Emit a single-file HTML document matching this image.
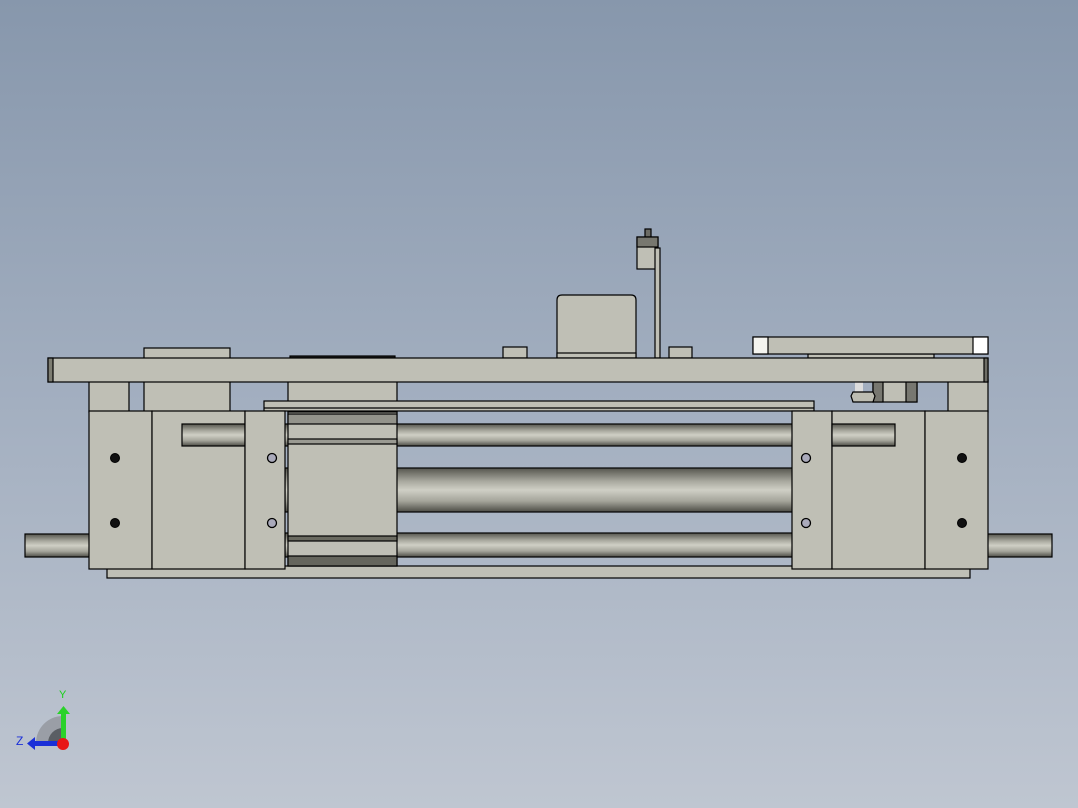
<!DOCTYPE html>
<html><head><meta charset="utf-8"><style>
html,body{margin:0;padding:0;width:1078px;height:808px;overflow:hidden;}
body{background:linear-gradient(#8797ac,#a3afc0 50%,#bfc6d1);}
svg{position:absolute;left:0;top:0;}
</style></head><body>
<svg width="1078" height="808" viewBox="0 0 1078 808" xmlns="http://www.w3.org/2000/svg">
<defs>
<linearGradient id="rod" x1="0" y1="0" x2="0" y2="1">
<stop offset="0" stop-color="#55554e"/><stop offset="0.3" stop-color="#a8a89e"/><stop offset="0.5" stop-color="#cfcfc5"/><stop offset="0.75" stop-color="#a5a59b"/><stop offset="1" stop-color="#4c4c45"/>
</linearGradient>
</defs>
<g stroke="#000" stroke-width="1.2" fill="#bfbfb5">
<!-- top parts -->
<rect x="645" y="229" width="6" height="16" fill="#6b6b64"/>
<rect x="637" y="237" width="21" height="32"/>
<rect x="637" y="237" width="21" height="10" fill="#77776f"/>
<rect x="655" y="248" width="5" height="110"/>
<path d="M557 358 V300 Q557 295 562 295 H631 Q636 295 636 300 V358 Z"/>
<rect x="557" y="353" width="79" height="5"/>
<rect x="503" y="347" width="24" height="11"/>
<rect x="669" y="347" width="23" height="11"/>
<rect x="144" y="348" width="86" height="64"/>
<rect x="290" y="356" width="105" height="2" fill="#222"/>
<rect x="808" y="354" width="126" height="4"/>
<rect x="753" y="337" width="235" height="17"/>
<rect x="753" y="337" width="15" height="17" fill="#f4f4ef"/>
<rect x="973" y="337" width="15" height="17" fill="#fff"/>
<!-- posts under plate -->
<rect x="89" y="380" width="40" height="32"/>
<rect x="948" y="380" width="40" height="32"/>
<rect x="288" y="380" width="109" height="32"/>
<rect x="855" y="382" width="8" height="10" fill="#ddd" stroke="none"/>
<rect x="873" y="382" width="44" height="20"/>
<rect x="873" y="382" width="10" height="20" fill="#777770"/>
<rect x="906" y="382" width="11" height="20" fill="#777770"/>
<path d="M853 392 H873 L875 396 L873 402 H853 L851 396 Z" fill="#bdbdb2"/>
<!-- top plate -->
<rect x="48" y="358" width="940" height="24"/>
<rect x="48" y="358" width="5" height="24" fill="#7d7d72"/>
<rect x="984" y="358" width="4" height="24" fill="#6d6d66"/>
<!-- thin plate -->
<rect x="264" y="401" width="550" height="10"/>
<line x1="264" y1="408" x2="814" y2="408"/>
<!-- bottom plate -->
<rect x="107" y="566" width="863" height="12"/>
<!-- rods -->
<rect x="25" y="534" width="66" height="23" fill="url(#rod)"/>
<rect x="986" y="534" width="66" height="23" fill="url(#rod)"/>
<rect x="182" y="424" width="713" height="22" fill="url(#rod)"/>
<rect x="285" y="468" width="510" height="44" fill="url(#rod)"/>
<rect x="285" y="533" width="510" height="24" fill="url(#rod)"/>
<!-- piston -->
<rect x="288" y="412" width="109" height="154"/>
<rect x="288" y="414" width="109" height="10" fill="#93938b"/>
<rect x="288" y="439" width="109" height="5" fill="#9a9a92"/>
<rect x="288" y="536" width="109" height="5" fill="#6a6a60"/>
<rect x="288" y="556" width="109" height="10" fill="#65655c"/>
<!-- left blocks -->
<rect x="89" y="411" width="63" height="158"/>
<rect x="152" y="411" width="93" height="158"/>
<rect x="182" y="424" width="63" height="22" fill="url(#rod)"/>
<rect x="245" y="411" width="40" height="158"/>
<!-- right blocks -->
<rect x="792" y="411" width="40" height="158"/>
<rect x="832" y="411" width="93" height="158"/>
<rect x="832" y="424" width="63" height="22" fill="url(#rod)"/>
<rect x="925" y="411" width="63" height="158"/>
</g>
<g fill="#111" stroke="#000">
<circle cx="115" cy="458" r="4.5"/><circle cx="115" cy="523" r="4.5"/>
<circle cx="962" cy="458" r="4.5"/><circle cx="962" cy="523" r="4.5"/>
</g>
<g fill="#aab" stroke="#000" stroke-width="1.3">
<circle cx="272" cy="458" r="4.5"/><circle cx="272" cy="523" r="4.5"/>
<circle cx="806" cy="458" r="4.5"/><circle cx="806" cy="523" r="4.5"/>
</g>
<!-- triad -->
<path d="M36 743 A27 27 0 0 1 63 716 V743 Z" fill="#9a9ea6"/>
<path d="M48 743 A15 15 0 0 1 63 728 V743 Z" fill="#5a5e64"/>
<rect x="61" y="712" width="5" height="29" fill="#2ad22a"/>
<path d="M57 714 L63.5 706 L70 714 Z" fill="#2ad22a"/>
<rect x="34" y="741" width="27" height="5" fill="#1a2fd8"/>
<path d="M35 737 L27 743.5 L35 750 Z" fill="#1a2fd8"/>
<circle cx="63" cy="744" r="6" fill="#e81616"/>
<text x="59" y="698" font-family="Liberation Sans,sans-serif" font-size="11" fill="#18d018">Y</text>
<text x="16" y="745" font-family="Liberation Sans,sans-serif" font-size="12" fill="#1a2fd8">Z</text>
</svg>
</body></html>
